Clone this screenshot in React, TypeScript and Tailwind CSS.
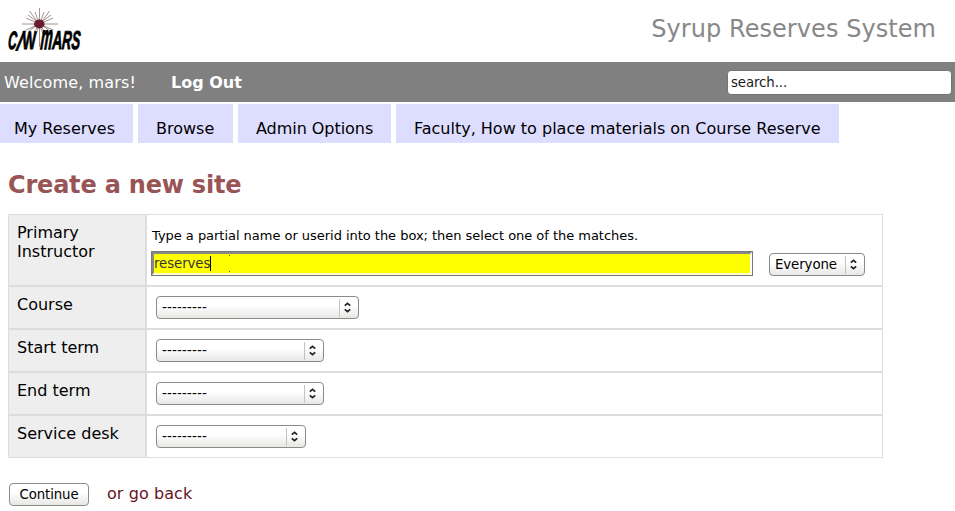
import React from "react";

const rays = [
  [22, 24, 58, 24], [39.5, 8, 39.5, 47], [29.5, 11, 45, 32], [49.5, 11, 34, 32],
  [26, 18, 53, 30], [53, 18, 26, 30], [35, 12, 43, 34], [44, 12, 36, 34],
  [28, 15, 50, 31], [51, 15, 29, 31],
];

const letters = [
  { ch: "C", t: "translate(7.5 48.5) skewX(-5) scale(0.48 1)", size: 25 },
  { ch: "/", t: "translate(16.3 50) skewX(-9) scale(0.65 1)", size: 26 },
  { ch: "W", t: "translate(22.5 48.5) skewX(2) scale(0.58 1)", size: 25 },
  { ch: "m", t: "translate(40 49) skewX(-5) scale(0.55 1.45)", size: 24 },
  { ch: "A", t: "translate(52 49) skewX(-2) scale(0.54 1)", size: 26 },
  { ch: "R", t: "translate(61.5 49) skewX(-5) scale(0.5 1)", size: 26 },
  { ch: "S", t: "translate(71 49) skewX(-5) scale(0.5 1)", size: 26 },
];

function Logo() {
  return (
    <svg width="100" height="62" viewBox="0 0 100 62" role="img" aria-label="C/W MARS">
      {rays.map(([x1, y1, x2, y2], i) => (
        <line key={i} x1={x1} y1={y1} x2={x2} y2={y2} stroke="#65474c" strokeWidth="0.6" />
      ))}
      <ellipse cx="39.3" cy="24" rx="5.3" ry="4.4" fill="#6b1a30" />
      <g fontFamily="Liberation Sans, sans-serif" fontWeight="bold" fontStyle="italic" fill="#000" stroke="#000" strokeWidth="0.9">
        {letters.map((l, i) => (
          <text key={i} transform={l.t} fontSize={l.size}>{l.ch}</text>
        ))}
      </g>
    </svg>
  );
}

function Select({ label, className }: { label: string; className: string }) {
  return (
    <button className={`flex h-[23px] items-center rounded-[4px] border border-[#8b8b88] bg-linear-to-b from-white from-40% to-[#e8e7e6] pl-[5px] text-left text-[13.33px] leading-4 ${className}`}>
      <span className="flex-1 whitespace-nowrap">{label}</span>
      <span className="h-[18px] w-px bg-[#c4c3c0]" />
      <svg className="ml-[3px] mr-[6px]" width="9" height="11" viewBox="0 0 9 11" fill="none" stroke="#222" strokeWidth="1.7">
        <path d="M1.8 3.7 4.5 1.3 7.2 3.7M1.8 7.3 4.5 9.7 7.2 7.3" />
      </svg>
    </button>
  );
}

const tabs = [
  { label: "My Reserves", cls: "w-[133px] pl-[14px]" },
  { label: "Browse", cls: "w-[95px] pl-[18px]" },
  { label: "Admin Options", cls: "w-[153px] pl-[18px] tracking-[-0.05px]" },
  { label: "Faculty, How to place materials on Course Reserve", cls: "w-[443px] pl-[18px]" },
];

const rows = [
  { label: "Course", width: "w-[203px]" },
  { label: "Start term", width: "w-[168px]" },
  { label: "End term", width: "w-[168px]" },
  { label: "Service desk", width: "w-[150px]" },
];

export default function App() {
  return (
    <div className="h-[511px] w-[955px] overflow-hidden bg-white font-['DejaVu_Sans',sans-serif] text-base leading-[19px] text-black">
      <header className="flex h-[62px] justify-between">
        <Logo />
        <h1 className="mr-[19px] mt-[15px] text-2xl leading-[28px] tracking-[0.06px] text-[#888]">Syrup Reserves System</h1>
      </header>
      <div className="flex h-10 items-center bg-[#808080] pl-1 pr-[3px] text-white">
        <span className="w-[167px] tracking-[0.14px]">Welcome, mars!</span>
        <a className="font-bold">Log Out</a>
        <input className="ml-auto h-[25px] w-[225px] rounded-[4px] border border-[#747474] bg-white px-[3px] text-[13.33px] tracking-[-0.1px] text-[#1a1a1a] outline-none" defaultValue="search..." />
      </div>
      <nav className="mt-0.5 flex gap-[5px]">
        {tabs.map((t) => (
          <a key={t.label} className={`h-[39px] whitespace-nowrap bg-[#ddddff] pt-[15px] ${t.cls}`}>{t.label}</a>
        ))}
      </nav>
      <main className="px-2">
        <h2 className="mt-7 text-2xl font-bold leading-[28px] tracking-[-0.2px] text-[#995555]">Create a new site</h2>
        <div className="mt-[15px] w-[875px]">
          <div className="flex h-[72px]">
            <div className="w-[138px] border border-[#ddd] bg-[#eee] px-2 pt-2">Primary Instructor</div>
            <div className="flex-1 border border-[#ddd] pl-[5px] pt-[13px]">
              <p className="text-[13px] leading-4 tracking-[-0.03px]">Type a partial name or userid into the box; then select one of the matches.</p>
              <div className="mt-[7px] flex">
                <div className="-ml-px h-[25px] w-[602px] border border-[#777]">
                  <div className="flex h-full items-center border-2 border-b-[#ffffcc] border-l-[#888] border-r-white border-t-[#888] bg-[#ff0] bg-clip-padding text-[13.33px] tracking-[-0.1px] text-[#333]">
                    <span>reserves</span>
                    <span className="h-[15px] w-px bg-black" />
                    <span className="ml-[18px] flex h-[17px] w-px flex-col justify-between">
                      <i className="h-px bg-[#553]" />
                      <i className="h-px bg-[#553]" />
                    </span>
                  </div>
                </div>
                <Select label="Everyone" className="ml-4 mt-[2px] w-[96px] tracking-[-0.1px]" />
              </div>
            </div>
          </div>
          {rows.map((r) => (
            <div key={r.label} className="flex h-[43px]">
              <div className="w-[138px] border border-[#ddd] bg-[#eee] px-2 pt-2">{r.label}</div>
              <div className="flex-1 border border-[#ddd] pl-[9px] pt-[9px]">
                <Select label="---------" className={`tracking-[0.2px] ${r.width}`} />
              </div>
            </div>
          ))}
        </div>
        <div className="mt-[25px] flex items-start pl-px">
          <button className="h-[23px] w-20 rounded-[4px] border border-[#8b8b88] bg-linear-to-b from-white from-40% to-[#e8e7e6] text-[13.33px] leading-4 tracking-[-0.1px]">Continue</button>
          <a className="ml-[18px] mt-px tracking-[0.08px] text-[#661122]">or go back</a>
        </div>
      </main>
    </div>
  );
}
